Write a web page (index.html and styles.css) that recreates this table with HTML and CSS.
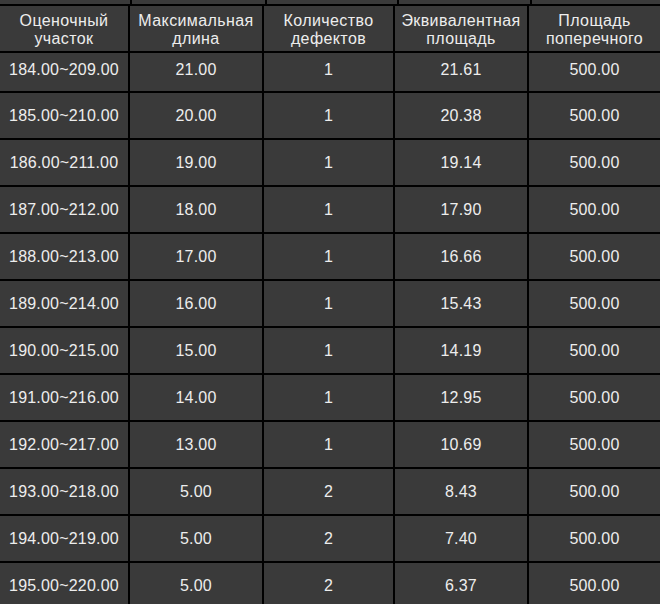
FILE: index.html
```html
<!DOCTYPE html>
<html lang="ru">
<head>
<meta charset="utf-8">
<link rel="stylesheet" href="styles.css">
</head>
<body>
<div class="strip">
  <div class="s"></div><div class="s"></div><div class="s"></div><div class="s"></div><div class="s"></div>
</div>
<div class="table">
  <div class="cell head">Оценочный<br>участок</div>
  <div class="cell head">Максимальная<br>длина</div>
  <div class="cell head">Количество<br>дефектов</div>
  <div class="cell head">Эквивалентная<br>площадь</div>
  <div class="cell head">Площадь<br>поперечного</div>

  <div class="cell first">184.00~209.00</div><div class="cell first">21.00</div><div class="cell first">1</div><div class="cell first">21.61</div><div class="cell first">500.00</div>
  <div class="cell">185.00~210.00</div><div class="cell">20.00</div><div class="cell">1</div><div class="cell">20.38</div><div class="cell">500.00</div>
  <div class="cell">186.00~211.00</div><div class="cell">19.00</div><div class="cell">1</div><div class="cell">19.14</div><div class="cell">500.00</div>
  <div class="cell">187.00~212.00</div><div class="cell">18.00</div><div class="cell">1</div><div class="cell">17.90</div><div class="cell">500.00</div>
  <div class="cell">188.00~213.00</div><div class="cell">17.00</div><div class="cell">1</div><div class="cell">16.66</div><div class="cell">500.00</div>
  <div class="cell">189.00~214.00</div><div class="cell">16.00</div><div class="cell">1</div><div class="cell">15.43</div><div class="cell">500.00</div>
  <div class="cell">190.00~215.00</div><div class="cell">15.00</div><div class="cell">1</div><div class="cell">14.19</div><div class="cell">500.00</div>
  <div class="cell">191.00~216.00</div><div class="cell">14.00</div><div class="cell">1</div><div class="cell">12.95</div><div class="cell">500.00</div>
  <div class="cell">192.00~217.00</div><div class="cell">13.00</div><div class="cell">1</div><div class="cell">10.69</div><div class="cell">500.00</div>
  <div class="cell">193.00~218.00</div><div class="cell">5.00</div><div class="cell">2</div><div class="cell">8.43</div><div class="cell">500.00</div>
  <div class="cell">194.00~219.00</div><div class="cell">5.00</div><div class="cell">2</div><div class="cell">7.40</div><div class="cell">500.00</div>
  <div class="cell">195.00~220.00</div><div class="cell">5.00</div><div class="cell">2</div><div class="cell">6.37</div><div class="cell">500.00</div>
</div>
</body>
</html>
```
FILE: styles.css
```css
html, body {
  margin: 0;
  padding: 0;
  background: #000;
}
body {
  width: 660px;
  height: 604px;
  overflow: hidden;
  font-family: "Liberation Sans", Arial, sans-serif;
  color: #ededed;
}
.strip {
  display: grid;
  grid-template-columns: 130px 133px 130px 131px 1fr;
  column-gap: 2px;
  height: 4px;
  margin-bottom: 2px;
}
.strip .s {
  background: #3a3a3a;
}
.table {
  display: grid;
  grid-template-columns: 128px 132px 129px 132px 1fr;
  grid-template-rows: 45px 38px repeat(11, 45px);
  gap: 2px;
}
.cell {
  background: #3a3a3a;
  display: flex;
  align-items: center;
  justify-content: center;
  text-align: center;
  font-size: 16px;
  letter-spacing: 0.2px;
}
.cell.head {
  font-size: 16px;
  line-height: 18px;
  letter-spacing: 0.4px;
  padding-top: 2px;
  box-sizing: border-box;
}
.cell.first {
  padding-bottom: 4px;
  box-sizing: border-box;
}
```
